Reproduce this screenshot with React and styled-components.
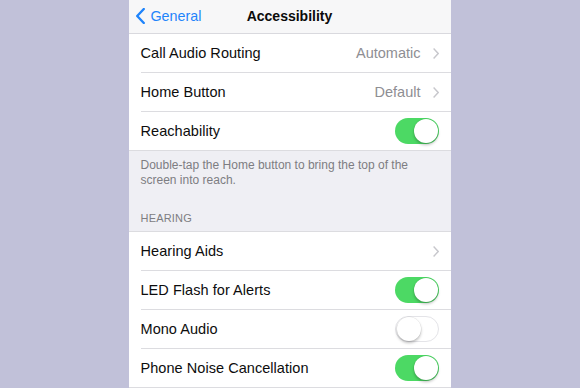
import React from "react";
import styled, { createGlobalStyle } from "styled-components";

const Global = createGlobalStyle`
  html, body {
    margin: 0;
    padding: 0;
    background: #c1c1d9;
    font-family: "Liberation Sans", Arial, sans-serif;
    -webkit-font-smoothing: antialiased;
  }
`;

const Page = styled.div`
  width: 580px;
  height: 388px;
  display: flex;
  justify-content: center;
  overflow: hidden;
`;

const Screen = styled.div`
  width: 322px;
  height: 388px;
  margin-left: -1px;
  background: #efeff4;
  overflow: hidden;
  display: flex;
  flex-direction: column;
`;

const NavBar = styled.div`
  height: 33px;
  flex-shrink: 0;
  background: #f7f7f8;
  border-bottom: 1px solid #d9d9de;
  display: grid;
  grid-template-columns: 1fr auto 1fr;
  align-items: center;
  padding: 0 7px;
`;

const Back = styled.div`
  display: flex;
  align-items: center;
  gap: 6px;
  color: #1f84fb;
  font-size: 14.3px;
  padding-bottom: 2px;
`;

const Title = styled.div`
  font-size: 14px;
  font-weight: 700;
  color: #0b0b0b;
  padding-bottom: 2px;
`;

const Group = styled.div`
  background: #fff;
  border-top: ${(p) => (p.$top ? "1px solid #dcdce0" : "none")};
  border-bottom: 1px solid #dcdce0;
  flex-shrink: 0;
`;

const Row = styled.div`
  height: 38px;
  margin-left: 12px;
  padding-right: 12px;
  display: flex;
  align-items: center;
  border-bottom: ${(p) => (p.$last ? "none" : "1px solid #dcdce0")};
`;

const Label = styled.div`
  flex: 1;
  font-size: 14.5px;
  color: #0d0d0d;
  letter-spacing: 0.05px;
`;

const Value = styled.div`
  font-size: 14.5px;
  color: #8e8e93;
  margin-right: 12px;
`;

const Footer = styled.div`
  padding: 7px 20px 0 12px;
  font-size: 12px;
  line-height: 15px;
  color: #7d7d82;
  flex-shrink: 0;
`;

const Header = styled.div`
  padding: 23px 12px 6px;
  font-size: 11px;
  line-height: 14px;
  color: #7d7d82;
  letter-spacing: 0.2px;
  flex-shrink: 0;
`;

const Track = styled.div`
  width: 44px;
  height: 26px;
  box-sizing: border-box;
  border-radius: 13px;
  background: ${(p) => (p.$on ? "#4cd964" : "#fff")};
  border: ${(p) => (p.$on ? "none" : "1.5px solid #e4e4e8")};
  display: flex;
  align-items: center;
  justify-content: ${(p) => (p.$on ? "flex-end" : "flex-start")};
  padding: 0 1px;
`;

const Knob = styled.div`
  width: 24px;
  height: 24px;
  border-radius: 50%;
  background: #fff;
  box-shadow: 0 2px 3px rgba(0, 0, 0, 0.25), 0 0 0 0.5px rgba(0, 0, 0, 0.08);
`;

const Chevron = () => (
  <svg width="6" height="11" viewBox="0 0 6 11">
    <path d="M0.6 0.6 L5.2 5.5 L0.6 10.4" fill="none" stroke="#c7c7cc" strokeWidth="1.4" />
  </svg>
);

const BackChevron = () => (
  <svg width="9" height="16" viewBox="0 0 9 16">
    <path d="M7.8 1 L1.2 8 L7.8 15" fill="none" stroke="#1f84fb" strokeWidth="2.4" strokeLinecap="round" strokeLinejoin="round" />
  </svg>
);

const Switch = ({ on }) => (
  <Track $on={on}>
    <Knob />
  </Track>
);

const App = () => (
  <Page>
    <Global />
    <Screen>
      <NavBar>
        <Back>
          <BackChevron />
          General
        </Back>
        <Title>Accessibility</Title>
        <div />
      </NavBar>

      <Group>
        <Row>
          <Label>Call Audio Routing</Label>
          <Value>Automatic</Value>
          <Chevron />
        </Row>
        <Row>
          <Label>Home Button</Label>
          <Value>Default</Value>
          <Chevron />
        </Row>
        <Row $last>
          <Label>Reachability</Label>
          <Switch on />
        </Row>
      </Group>

      <Footer>Double-tap the Home button to bring the top of the screen into reach.</Footer>
      <Header>HEARING</Header>

      <Group $top>
        <Row>
          <Label>Hearing Aids</Label>
          <Chevron />
        </Row>
        <Row>
          <Label>LED Flash for Alerts</Label>
          <Switch on />
        </Row>
        <Row>
          <Label>Mono Audio</Label>
          <Switch />
        </Row>
        <Row $last>
          <Label>Phone Noise Cancellation</Label>
          <Switch on />
        </Row>
      </Group>
    </Screen>
  </Page>
);

export default App;
